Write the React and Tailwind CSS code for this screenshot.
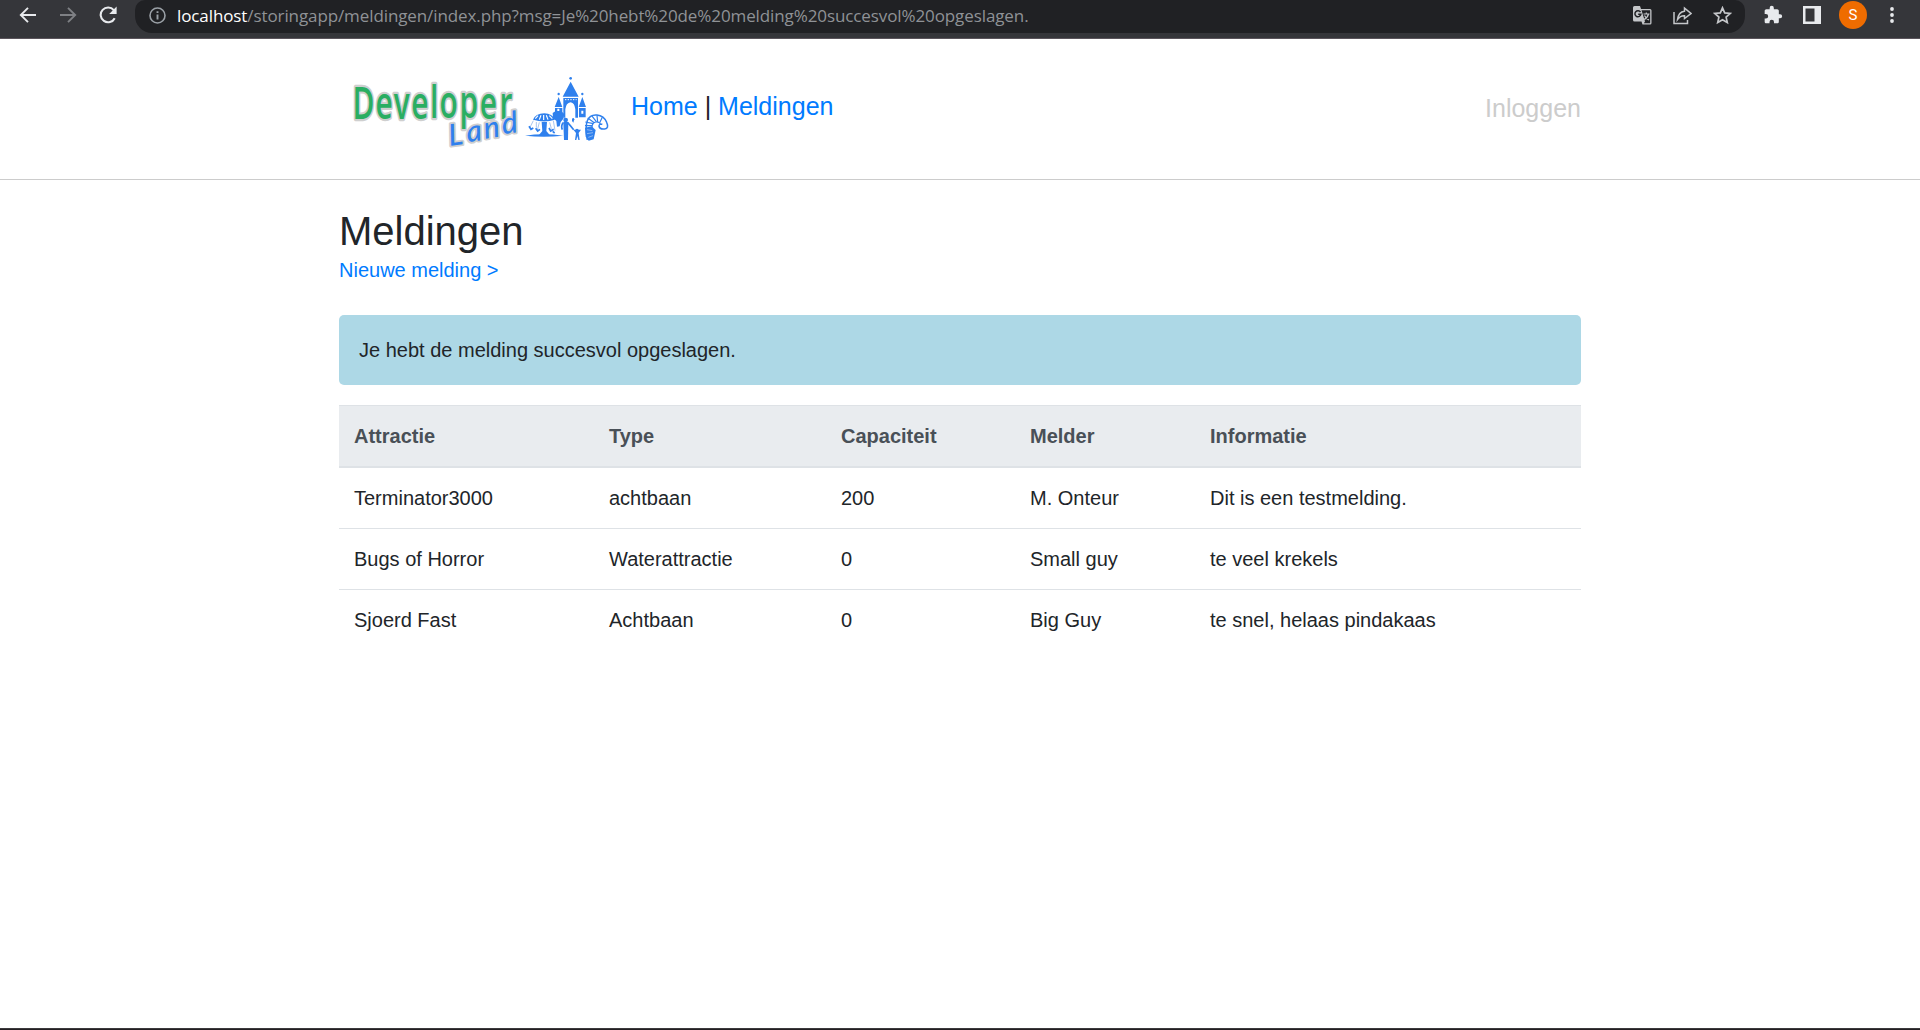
import React from "react";

const columns = ["Attractie", "Type", "Capaciteit", "Melder", "Informatie"];
const rows = [
  ["Terminator3000", "achtbaan", "200", "M. Onteur", "Dit is een testmelding."],
  ["Bugs of Horror", "Waterattractie", "0", "Small guy", "te veel krekels"],
  ["Sjoerd Fast", "Achtbaan", "0", "Big Guy", "te snel, helaas pindakaas"],
];

function Arrow({ className, flip }) {
  return (
    <svg className={className} width="18" height="18" viewBox="0 0 18 18" fill="none" stroke="currentColor" strokeWidth="1.9">
      <path d={flip ? "M1 9H16M9 1.8 16.2 9 9 16.2" : "M17 9H2M9 1.8 1.8 9 9 16.2"} />
    </svg>
  );
}

function Logo() {
  return (
    <svg className="block h-[85px] w-[270px]" viewBox="0 0 270 85">
      <g transform="translate(0 5) scale(.3333)" paintOrder="stroke" strokeLinejoin="round">
        <g transform="scale(.66 1)" fontFamily="Open Sans, sans-serif" fontWeight="600" fontSize="136" fill="#2aae62" stroke="#cfcfcf" strokeWidth="13">
          <text x="34 139 222 301 386 430 521 613 702" y="131 131 131 131 128 130 130 131 131">Developer</text>
        </g>
        <g fontFamily="Lato, sans-serif" fontStyle="italic" fontWeight="500" fill="#2f80ed" stroke="#cfcfcf" strokeWidth="11" fontSize="90">
          <text x="314 368 420 474" y="213 202 191 178" rotate="-8">Land</text>
        </g>
      </g>
      <g transform="translate(170 1) scale(.3333)" fill="#2f80ed">
        <circle cx="167" cy="22" r="4" />
        <circle cx="131" cy="69" r="3.5" />
        <circle cx="202" cy="69" r="3.5" />
        <path d="M167 32 191 77H143zM131 78 142 108H119zM202 78 213 108H191z" />
        <path fillRule="evenodd" d="M145 81H189V140H181V115Q179 96 167 94Q153 96 151 115V140H145z" />
        <path d="M120 111H142V128H120zM192 111H212V139H192z" />
        <path d="M150 86H185" stroke="#fff" strokeWidth="3" strokeDasharray="4 4" />
        <path d="M199 119h6v9h-6zM127 113h6v7h-6z" fill="#fff" />
        <path d="M113 126l8-5 8 3 10-3 9 8-3 14-8 10-3 13-8 1-2-17-10-9z" />
        <path d="M30 194Q85 186 145 194Q85 200 30 194z" />
        <path d="M54 146Q61 128 88 127Q112 128 120 146Q88 157 54 146z" />
        <path d="M61 143l8-9M73 146l5-13M86 147V132M99 146l-5-13M112 143l-9-9" stroke="#fff" strokeWidth="3.5" />
        <path d="M80 153H96L94 180 106 194H70L82 180z" />
        <path d="M55 149 45 169M64 153V170M73 154 67 178M104 154l5 19M115 149l5 30" stroke="#a9c6ee" strokeWidth="3" />
        <path d="M42 166l6 9 7-4M62 172l6 8 7-5M102 171l5 9 9-5M113 181l6 5" fill="none" stroke="#2f80ed" strokeWidth="5" />
        <circle cx="152" cy="147" r="7" />
        <path d="M145 153H160L159 207H147z" />
        <path d="M158 155Q167 165 176 176M145 155Q137 164 142 176" fill="none" stroke="#2f80ed" strokeWidth="5" />
        <path d="M171 143q5-5 7 2l-3 10q-6-4-4-12" />
        <circle cx="186" cy="178" r="5" />
        <path d="M175 176l8 10-3 21h4l3-12 3 12h4l-3-21 7-10" />
        <path d="M217 207Q203 128 246 132Q267 134 275 154Q283 172 269 174Q254 176 252 165Q253 158 262 160" fill="none" stroke="#2f80ed" strokeWidth="4.5" />
        <path d="M236 190Q224 156 242 153Q252 151 257 160" fill="none" stroke="#2f80ed" strokeWidth="3.5" />
        <path d="M210 164 231 164M211 153l24 5M218 141l20 14M230 134l14 18M246 133l2 20M262 139l-8 16" stroke="#2f80ed" strokeWidth="3.5" />
        <path d="M210 170 230 166 242 177 236 205 221 209 212 196z" />
        <path d="M216 176l16 3M216 188l18-3M220 199l14-5" stroke="#b9d2f5" strokeWidth="2" />
      </g>
    </svg>
  );
}

function BrowserBar() {
  return (
    <div className="flex h-[39px] items-start border-b border-[#5b555c] bg-[#35363a] text-[#e8eaed]">
      <div className="flex h-[30px] w-[135px] shrink-0 items-center pl-[19px]">
        <Arrow />
        <Arrow flip className="ml-[22px] text-[#7e8084]" />
        <svg className="ml-[22px]" width="18" height="18" viewBox="0 0 18 18" fill="none">
          <path d="M15.7 12.2A7.4 7.4 0 1 1 14.8 4.2" stroke="currentColor" strokeWidth="2.1" />
          <path d="M17.6.5V8H10.2z" fill="currentColor" />
        </svg>
      </div>
      <div className="flex h-[33px] w-[1610px] shrink-0 items-start rounded-b-[17px] rounded-t-[10px] bg-[#202124]">
        <svg className="ml-[14px] mt-[7px]" width="17" height="17" viewBox="0 0 17 17" fill="none" stroke="#9aa0a6">
          <circle cx="8.5" cy="8.5" r="7.5" strokeWidth="1.6" />
          <path d="M8.5 7.5V12.6M8.5 4.3V6" strokeWidth="1.9" />
        </svg>
        <div className="ml-[11px] mt-1 whitespace-nowrap font-['Open_Sans',sans-serif] text-[17px] leading-6 tracking-[-0.1px] text-[#8f9296]">
          <span className="text-white">localhost</span>/storingapp/meldingen/index.php?msg=Je%20hebt%20de%20melding%20succesvol%20opgeslagen.
        </div>
        <div className="ml-auto mr-[13px] mt-[6px] flex items-center gap-[21px] text-[#c4c6c9]">
          <svg width="19" height="19" viewBox="0 0 19 19">
            <path d="M1.5 0H7l1 3h9q1.500 0 1.500 1.500V17q0 1.500-1.500 1.500H9.500L8.500 15.500H1.500Q0 15.500 0 14V1.500Q0 0 1.500 0z" fill="currentColor" />
            <path d="M8.500 4.200H17.200V17.300H10.800L12 15.500z" fill="#202124" />
            <path d="M7.500 6.200A3 3 0 1 0 7.900 8.200H5.200" fill="none" stroke="#202124" strokeWidth="1.500" />
            <path d="M10.500 8H16.500M13.300 6.500V8M15.500 8Q14.500 12 11 13.500M11.500 9.500Q13 12.500 16 14" fill="none" stroke="currentColor" strokeWidth="1.200" />
          </svg>
          <svg width="19" height="19" viewBox="0 0 19 19" fill="none" stroke="currentColor" strokeWidth="1.500">
            <path d="M1 6V17.500H14.500V14" />
            <path d="M11.500 2.200 18 7.500 11.500 12.500V9.800Q7.500 9.500 4.500 13.500 5.500 5.900 11.500 5.200z" />
          </svg>
          <svg width="19" height="19" viewBox="0 0 19 19" fill="none" stroke="currentColor" strokeWidth="1.700">
            <path d="M9.500 1.800 11.700 6.900 17.300 7.400 13.100 11.100 14.300 16.600 9.500 13.700 4.700 16.600 5.900 11.100 1.700 7.400 7.300 6.900z" />
          </svg>
        </div>
      </div>
      <div className="flex h-[30px] items-center pl-[18px]">
        <svg width="20" height="20" viewBox="0 0 24 24" fill="currentColor">
          <path d="M20.500 11H19V7c0-1.100-.9-2-2-2h-4V3.500a2.500 2.500 0 0 0-5 0V5H4c-1.100 0-2 .9-2 2v3.800h1.500a2.700 2.700 0 0 1 0 5.400H2V20c0 1.100.9 2 2 2h3.800v-1.500a2.700 2.700 0 0 1 5.400 0V22H17c1.100 0 2-.9 2-2v-4h1.500a2.500 2.500 0 0 0 0-5z" />
        </svg>
        <svg className="ml-[20px]" width="18" height="18" viewBox="0 0 18 18">
          <path fillRule="evenodd" d="M0 0H18V18H0zM2.500 2.500V15.500H11.500V2.500z" fill="currentColor" />
        </svg>
        <div className="ml-[18px] flex size-7 items-center justify-center rounded-full bg-[#ef6c00] font-[Roboto,sans-serif] text-[15px] text-white">S</div>
        <svg className="ml-[22px]" width="6" height="18" viewBox="0 0 6 18" fill="currentColor">
          <circle cx="3" cy="3" r="1.900" />
          <circle cx="3" cy="9" r="1.900" />
          <circle cx="3" cy="15" r="1.900" />
        </svg>
      </div>
    </div>
  );
}

export default function App() {
  return (
    <div className="flex h-[1030px] w-[1920px] flex-col overflow-hidden bg-white font-['Liberation_Sans',Arial,sans-serif] text-[20px] leading-[30px] text-[#212529]">
      <BrowserBar />
      <header className="h-[141px] shrink-0 border-b border-[#cccccc]">
        <div className="mx-auto flex w-[1242px] pt-[31px]">
          <div className="ml-[6px]">
            <Logo />
          </div>
          <nav className="ml-4 mt-[17px] whitespace-pre text-[25px] leading-[38px]">
            <a className="text-[#007bff]">Home</a> | <a className="text-[#007bff]">Meldingen</a>
          </nav>
          <a className="ml-auto mt-[19px] text-[25px] leading-[38px] text-[#cccccc]">Inloggen</a>
        </div>
      </header>
      <main className="mx-auto w-[1242px] grow pt-[27px]">
        <h1 className="text-[40px] leading-[48px]">Meldingen</h1>
        <a className="block text-[#007bff]">Nieuwe melding &gt;</a>
        <div className="mt-[30px] rounded-[5px] bg-[#add8e6] p-5">Je hebt de melding succesvol opgeslagen.</div>
        <table className="mt-5 w-full table-fixed border-separate border-spacing-0 text-left">
          <colgroup>
            <col className="w-[255px]" />
            <col className="w-[232px]" />
            <col className="w-[189px]" />
            <col className="w-[180px]" />
            <col />
          </colgroup>
          <thead>
            <tr>
              {columns.map((c) => (
                <th key={c} className="border-b-2 border-t border-[#dee2e6] bg-[#e9ecef] px-[15px] py-[15px] font-bold text-[#495057]">{c}</th>
              ))}
            </tr>
          </thead>
          <tbody>
            {rows.map((row, i) => (
              <tr key={row[0]}>
                {row.map((cell, j) => (
                  <td key={j} className={i === 0 ? "p-[15px]" : "border-t border-[#dee2e6] p-[15px]"}>{cell}</td>
                ))}
              </tr>
            ))}
          </tbody>
        </table>
      </main>
      <div className="h-[2px] shrink-0 border-t border-[#3c3a3d] bg-[#231f22]" />
    </div>
  );
}
